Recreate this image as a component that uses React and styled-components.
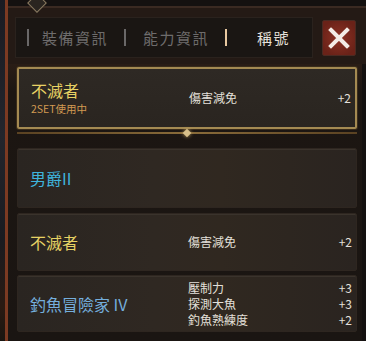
import React from "react";
import styled, { createGlobalStyle } from "styled-components";

const Global = createGlobalStyle`
  html, body { margin: 0; padding: 0; background: #121014; }
  body { font-family: "Noto Sans CJK TC", "Noto Sans", sans-serif; }
`;

const Screen = styled.div`
  width: 366px;
  height: 341px;
  overflow: hidden;
  display: flex;
  background: #15161b;
`;

const LeftEdge = styled.div`
  width: 5px;
  flex: none;
  background: linear-gradient(180deg, #1a1b22 0%, #23252c 40%, #1a1b20 70%, #2a1a12 90%, #1a1510 100%);
`;

const Frame = styled.div`
  flex: 1;
  display: flex;
  flex-direction: column;
  border-left: 3px solid #7c3a22;
  box-shadow: inset 1px 0 0 #3a1a10;
  background: linear-gradient(90deg, #2a1d16 0px, #1f1813 8px, #1c1713 100%);
  position: relative;
`;

const TopOrnament = styled.div`
  position: absolute;
  top: -4px;
  left: 22px;
  width: 12px;
  height: 12px;
  transform: rotate(45deg);
  border: 1px solid #8a7a60;
  background: #2a2520;
`;

const TopStrip = styled.div`
  height: 6px;
  background: #141110;
  border-bottom: 2px solid #3a2a22;
`;

const Header = styled.div`
  display: flex;
  align-items: center;
  gap: 9px;
  padding: 9px 7px 6px 7px;
  background: #241a15;
`;

const TabBar = styled.div`
  width: 298px;
  height: 41px;
  box-sizing: border-box;
  background: #1a1613;
  border: 1px solid #2a221d;
  display: flex;
  align-items: center;
  padding-left: 11px;
`;

const Sep = styled.span`
  width: 2px;
  height: 17px;
  background: ${(p) => (p.$active ? "#e8c8a0" : "#6a6868")};
  flex: none;
  margin-right: ${(p) => p.$mr}px;
`;

const Tab = styled.span`
  font-size: 15px;
  letter-spacing: 1.5px;
  color: ${(p) => (p.$active ? "#e6e2dc" : "#6e6c6c")};
  margin-right: ${(p) => p.$mr}px;
  white-space: nowrap;
`;

const CloseBtn = styled.div`
  width: 34px;
  height: 36px;
  box-sizing: border-box;
  margin-top: 1px;
  background: radial-gradient(circle at 50% 50%, #8e3224 0%, #6a2218 80%);
  border: 1px solid #4a2a22;
  border-radius: 2px;
  display: flex;
  align-items: center;
  justify-content: center;
`;

const Body = styled.div`
  flex: 1;
  display: flex;
  flex-direction: column;
  padding: 3px 5px 0 9px;
  background: linear-gradient(180deg, #2a1d16 0%, #1c1612 10%, #1a1512 100%);
  border-right: 4px solid #141110;
`;

const Card = styled.div`
  height: ${(p) => p.$h}px;
  box-sizing: border-box;
  margin-top: ${(p) => p.$mt}px;
  display: grid;
  grid-template-columns: 158px 1fr;
  align-items: center;
  padding: 0 4px 0 12px;
  border-radius: 2px;
  border: ${(p) => (p.$sel ? "2px solid #a48a52" : "1px solid #2e2620")};
  background: ${(p) =>
    p.$sel
      ? "linear-gradient(180deg, #2e2924 0%, #2a2520 100%)"
      : "linear-gradient(90deg, #2a2521 0%, #2f2822 40%, #302820 60%, #2a2420 100%)"};
  box-shadow: ${(p) => (p.$sel ? "0 0 0 1px #3a2c1a" : "inset 0 1px 0 #3a332c")};
`;

const TitleCol = styled.div`
  display: flex;
  flex-direction: column;
  justify-content: center;
`;

const Title = styled.div`
  font-size: 16px;
  line-height: 20px;
  color: ${(p) => p.$c};
  white-space: nowrap;
`;

const Sub = styled.div`
  font-size: 10.5px;
  line-height: 14px;
  color: #d29a52;
  margin-top: 2px;
`;

const Stats = styled.div`
  display: flex;
  flex-direction: column;
  gap: 2px;
`;

const Stat = styled.div`
  display: flex;
  justify-content: space-between;
  font-size: 12px;
  line-height: 14px;
  color: #e4e0da;
`;

const Divider = styled.div`
  height: 19px;
  display: flex;
  align-items: flex-start;
  justify-content: center;
  position: relative;
  &::before {
    content: "";
    position: absolute;
    left: 0;
    right: 0;
    top: 3px;
    height: 2px;
    background: linear-gradient(90deg, #5a4222, #8a6c3a 50%, #5a4222);
  }
`;

const Gem = styled.div`
  position: relative;
  margin-top: 1px;
  width: 6px;
  height: 6px;
  transform: rotate(45deg);
  background: #d8c08a;
  box-shadow: 0 0 4px #c0a060;
`;

const Titles = [
  { name: "男爵II", color: "#3fb4dc", h: 60, mt: 0, stats: [] },
  { name: "不滅者", color: "#e6d264", h: 58, mt: 5, stats: [["傷害減免", "+2"]] },
  {
    name: "釣魚冒險家 IV",
    color: "#74aedc",
    h: 57,
    mt: 4,
    stats: [
      ["壓制力", "+3"],
      ["探測大魚", "+3"],
      ["釣魚熟練度", "+2"],
    ],
  },
];

export default function App() {
  return (
    <>
      <Global />
      <Screen>
        <LeftEdge />
        <Frame>
          <TopOrnament />
          <TopStrip />
          <Header>
            <TabBar>
              <Sep $mr={13} />
              <Tab $mr={16}>裝備資訊</Tab>
              <Sep $mr={17} />
              <Tab $mr={16}>能力資訊</Tab>
              <Sep $active $mr={30} />
              <Tab $active $mr={0}>稱號</Tab>
            </TabBar>
            <CloseBtn>
              <svg width="22" height="22" viewBox="0 0 22 22">
                <path d="M3 3 L19 19 M19 3 L3 19" stroke="#f4ece6" strokeWidth="4" strokeLinecap="square" />
              </svg>
            </CloseBtn>
          </Header>
          <Body>
            <Card $sel $h={62} $mt={0}>
              <TitleCol>
                <Title $c="#e8d264">不滅者</Title>
                <Sub>2SET使用中</Sub>
              </TitleCol>
              <Stats>
                <Stat>
                  <span>傷害減免</span>
                  <span>+2</span>
                </Stat>
              </Stats>
            </Card>
            <Divider>
              <Gem />
            </Divider>
            {Titles.map((t) => (
              <Card key={t.name} $h={t.h} $mt={t.mt}>
                <TitleCol>
                  <Title $c={t.color}>{t.name}</Title>
                </TitleCol>
                <Stats>
                  {t.stats.map(([k, v]) => (
                    <Stat key={k}>
                      <span>{k}</span>
                      <span>{v}</span>
                    </Stat>
                  ))}
                </Stats>
              </Card>
            ))}
          </Body>
        </Frame>
      </Screen>
    </>
  );
}
